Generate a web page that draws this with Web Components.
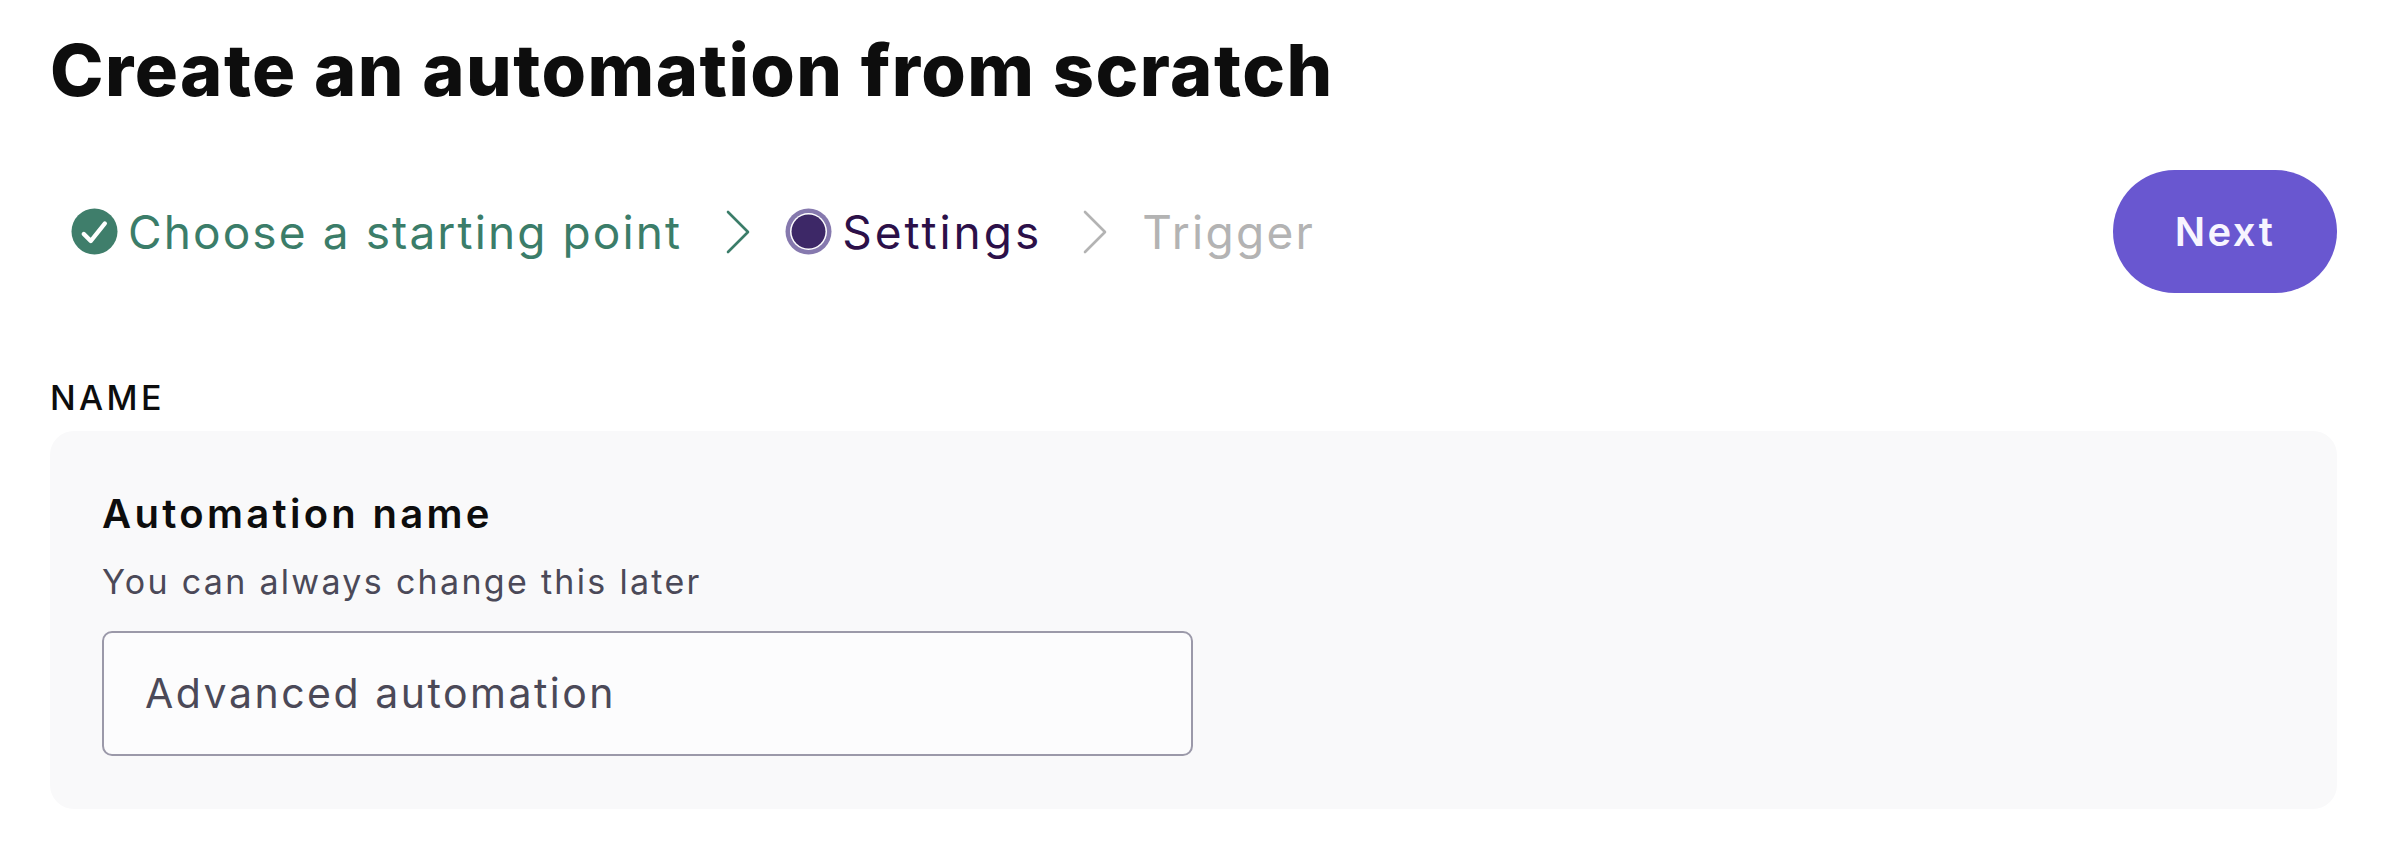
<!DOCTYPE html>
<html><head><meta charset="utf-8"><title>Create an automation</title>
<style>html,body{margin:0;background:#fff;font-family:Inter,"Liberation Sans",sans-serif}</style></head>
<body>
<x-page>
  <x-title>Create an automation from scratch</x-title>
  <x-toolbar>
    <x-stepper>
      <x-step state="done" style="--ls:2.1px">Choose a starting point</x-step>
      <x-chevron state="done" style="--before:44px;--after:35px"></x-chevron>
      <x-step state="current" style="--ls:3px">Settings</x-step>
      <x-chevron state="todo" style="--before:41px;--after:35px"></x-chevron>
      <x-step state="todo" style="--ls:2.3px">Trigger</x-step>
    </x-stepper>
    <x-button>Next</x-button>
  </x-toolbar>
  <x-section heading="NAME">
    <x-field label="Automation name" hint="You can always change this later" value="Advanced automation"></x-field>
  </x-section>
</x-page>
<script>
function def(name, html, extra){
  const tpl=document.createElement('template');tpl.innerHTML=html;
  customElements.define(name,class extends HTMLElement{
    constructor(){super();this.attachShadow({mode:'open'}).appendChild(tpl.content.cloneNode(true));}
    connectedCallback(){if(extra)extra.call(this,this.shadowRoot);}
  });
}
def('x-page',`<style>:host{display:block;box-sizing:border-box;width:2390px;height:860px;padding:0 53px 0 50px;overflow:hidden}</style><slot></slot>`);
def('x-title',`<style>:host{display:block;height:170px;padding-top:26px;box-sizing:border-box;font:800 72px/88px Inter,sans-serif;color:#0d0d0d;letter-spacing:1.45px;white-space:nowrap}</style><slot></slot>`);
def('x-toolbar',`<style>:host{display:flex;align-items:center;justify-content:space-between;height:123px}</style><slot></slot>`);
def('x-stepper',`<style>:host{display:flex;align-items:center;padding-left:21px}</style><slot></slot>`);
def('x-step',`<style>
:host{display:flex;align-items:center;gap:10px;font:400 46px/56px Inter,sans-serif;letter-spacing:var(--ls,2px);white-space:nowrap}
:host([state=done]){color:#3b7d69}
:host([state=current]){color:#2c1049}
:host([state=todo]){color:#b3b3b3}
svg{display:block;flex:none}
</style><span id="i"></span><slot></slot>`,function(r){
  const s=this.getAttribute('state');const i=r.getElementById('i');i.style.display='contents';
  if(s==='done')i.innerHTML='<svg width="47" height="47" viewBox="0 0 47 47"><circle cx="23.5" cy="23.5" r="23" fill="#3f7e6b"/><path d="M12.8 26l7 7L33.8 15.5" fill="none" stroke="#fff" stroke-width="4.4" stroke-linecap="round" stroke-linejoin="round"/></svg>';
  else if(s==='current')i.innerHTML='<svg width="47" height="47" viewBox="0 0 47 47"><circle cx="23.5" cy="23.5" r="23" fill="#8679ae"/><circle cx="23.5" cy="23.5" r="18.5" fill="#fff"/><circle cx="23.5" cy="23.5" r="17" fill="#3d2867"/></svg>';
  else i.remove();
});
def('x-chevron',`<style>:host{display:block;width:24px;height:44px;margin:0 var(--after,36px) 0 var(--before,45px)}
:host([state=done]){color:#3b7d69}:host([state=todo]){color:#b3b3b3}
svg{display:block}</style><svg width="24" height="44" viewBox="0 0 24 44"><path d="M2 2l20 20L2 42" fill="none" stroke="currentColor" stroke-width="2.6" stroke-linecap="round" stroke-linejoin="round"/></svg>`);
def('x-button',`<style>:host{display:flex;align-items:center;justify-content:center;width:224px;height:123px;border-radius:62px;background:#6957d0;color:#f7f5ff;font:600 40px/48px Inter,sans-serif;letter-spacing:2.5px}</style><slot></slot>`);
def('x-section',`<style>:host{display:block;margin-top:86px}
h2{margin:0 0 15px;font:500 34px/37px Inter,sans-serif;color:#0d0d0d;letter-spacing:3.4px}
.card{background:#f9f9fa;border-radius:24px;padding:60px 52px 52px;height:378px;box-sizing:border-box}</style>
<h2 id="h"></h2><div class="card"><slot></slot></div>`,function(r){r.getElementById('h').textContent=this.getAttribute('heading');});
def('x-field',`<style>:host{display:block}
.l{font:600 40px/46px Inter,sans-serif;color:#0d0d0d;letter-spacing:3.3px}
.h{font:400 34px/44px Inter,sans-serif;color:#4b4958;margin-top:23px;letter-spacing:2.3px}
.v{box-sizing:border-box;width:1091px;height:125px;margin-top:27px;border:2px solid #9b99a9;border-radius:10px;background:#fcfcfd;padding:0 41px 2px;display:flex;align-items:center;font:400 41px/48px Inter,sans-serif;color:#4b4958;letter-spacing:2.5px}</style>
<div class="l" id="l"></div><div class="h" id="h"></div><div class="v" id="v"></div>`,function(r){
  r.getElementById('l').textContent=this.getAttribute('label');
  r.getElementById('h').textContent=this.getAttribute('hint');
  r.getElementById('v').textContent=this.getAttribute('value');
});
</script>
</body></html>
